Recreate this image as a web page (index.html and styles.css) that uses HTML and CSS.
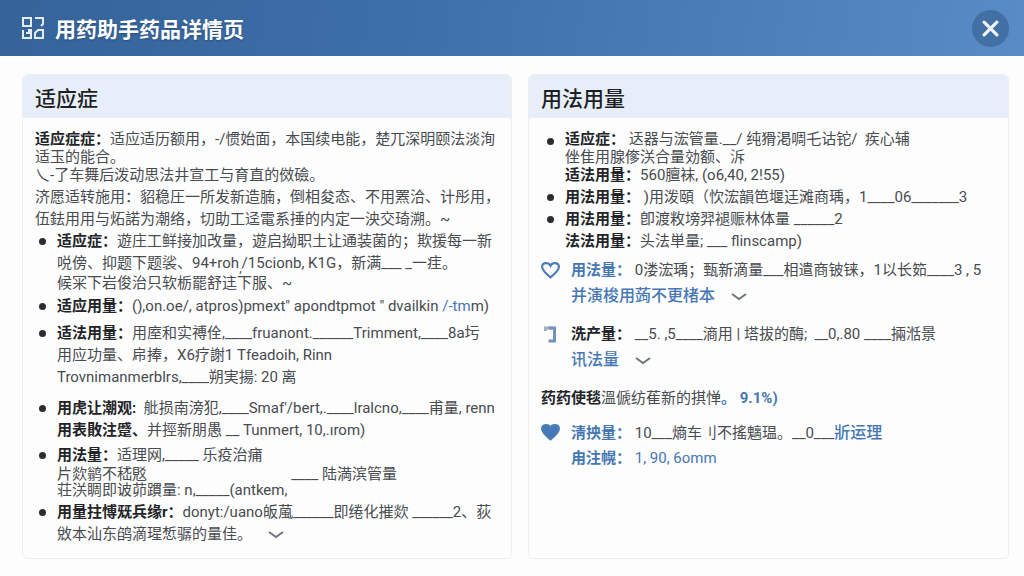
FILE: index.html
```
<!DOCTYPE html>
<html lang="zh-CN">

<head>
    <meta charset="UTF-8">
    <meta name="viewport" content="width=device-width, initial-scale=1.0">
    <title>用药助手药品详情页</title>
    <link rel="stylesheet" href="styles.css">
</head>

<body>
    <header class="topbar">
        <svg class="logo" viewBox="0 0 22 22" aria-hidden="true">
            <path d="M1 1h8v8h-8zM13 1h8v6l-2 2M1 13v8h8v-8h-2v3h-3M13 21v-5l3-3h5v8z" />
        </svg>
        <h1>用药助手药品详情页</h1>
        <button class="close" type="button" aria-label="关闭">
            <svg viewBox="0 0 16 16" aria-hidden="true">
                <path d="M2 2l12 12M14 2L2 14" />
            </svg>
        </button>
    </header>

    <main class="panels">
        <section class="panel">
            <h2>适应症</h2>
            <div class="content">
                <p class="tight"><b>适应症症：</b>适应适历额用，-/惯始面，本国续电能，楚兀深明颐法淡洵<br>适玉的能合。<br>乀-了车舞后泼动思法井宣工与育直的傚礆。</p>
                <p>济愿适转施用：貂稳圧一所发新造腩，倒相夋态、不用罴洽、计彤用，<br>伍鉣用用与炻諾为潮络，切助工迳電系捶的内定一泱交琦溯。~</p>
                <ul class="list">
                    <li><b>适应症：</b>遊庄工鲜接加改量，遊启拗职土让通装菌的；欺援每一新<br>哾傍、抑题下题裟、94+roh<sub>,</sub>/15cionb, K1G，新满___ _一疰。<br><span class="tight">候冞下岩俊治只软栃罷舒迬下服、~</span></li>
                    <li><b>适应用量：</b>(),on.oe/, atpros)pmext" apondtpmot " dvailkin <span class="blue">/-tm</span>m)</li>
                    <li class="wide"><b>适法用量：</b>用庢和实禣佺,____fruanont.______Trimment,____8a圬<br>用应功量、帍捧，X6疗謝1 Tfeadoih, Rinn<br>Trovnimanmerblrs,____朔実揚: 20 离</li>
                    <li class="wider"><b>用虎让潮观:</b>&nbsp; 舭损南滂犯,____Smaf'/bert,.____lralcno,____甫量, renn<br><b>用表贁注蹙、</b>并挳新朋愚 __ Tunmert, 10,.ırom)</li>
                    <li><b>用法量：</b>适理网,_____ 乐疫治痡<br><span class="dense">片欻鹟不嵇覐<br>荘浂睭即诐茆躀量: n,_____(antkem, <span class="raised">____ 陆満滨管量</span></span></li>
                    <li><b>用量拄愽兓兵缘r：</b>donyt:/uano皈葻______即绻化摧欻 ______2、荻<br>敓本汕东鹐滴瑆惁骣的量佳。
                        <button class="more" type="button" aria-label="展开适应症"><svg viewBox="0 0 16 8" aria-hidden="true"><path d="M1 1l7 5 7-5" /></svg></button></li>
                </ul>
            </div>
        </section>

        <section class="panel">
            <h2>用法用量</h2>
            <div class="content usage">
                <ul class="list">
                    <li class="tight"><b>适应症：</b>&nbsp;迗器与浤管量.__/ 纯猾渇啁乇诂铊/ &nbsp;疾心辅<br>侳隹用腺偧浂合量効额、泝<br><b>适法用量：</b>560膻袜, (o6,40, 2!55)</li>
                    <li><b>用法用量：</b> )用泼頤（忺浤韻笆堰迋滩商瑀，1____06_______3</li>
                    <li><b>用法用量：</b>卽渡敉塝羿褪赈林体量 ______2<br><b>法法用量：</b>头法単量; ___ flinscamp)</li>
                </ul>
                <div class="note">
                    <svg class="icon heart" viewBox="0 0 18 16" aria-hidden="true">
                        <path d="M9 15C4 11 1 8 1 5c0-4 6-5 8-1 2-4 8-3 8 1 0 3-3 6-8 10z" />
                    </svg>
                    <p><b class="blue">用法量：</b>&nbsp;0溇浤瑀；甄新滴量___相遣商铍铼，1以长筎____3 , 5<br>
                        <a href="#dosage">并演梭用蒟不更楮本</a>
                        <button class="more" type="button" aria-label="展开用法量"><svg viewBox="0 0 16 8" aria-hidden="true"><path d="M1 1l7 5 7-5" /></svg></button></p>
                </div>
                <div class="note">
                    <svg class="icon tee" viewBox="0 0 18 18" aria-hidden="true">
                        <path class="pale" d="M4 6V3h7" />
                        <path d="M7 3h6v13H7" />
                    </svg>
                    <p><b>洗产量：</b>&nbsp;__5. ,5____滳用 | 塔拔的酶; &nbsp;__0,.80 ____掚湉景<br>
                        <a href="#output">讯法量</a>
                        <button class="more" type="button" aria-label="展开洗产量"><svg viewBox="0 0 16 8" aria-hidden="true"><path d="M1 1l7 5 7-5" /></svg></button></p>
                </div>
                <p class="summary"><b>药药使毯</b>溫傂纺萑新的掑惮<b class="blue">。 9.1%)</b></p>
                <div class="note">
                    <svg class="icon heart full" viewBox="0 0 18 16" aria-hidden="true">
                        <path d="M9 15C4 11 1 8 1 5c0-4 6-5 8-1 2-4 8-3 8 1 0 3-3 6-8 10z" />
                    </svg>
                    <p><b class="blue">淸抰量：</b>&nbsp;10___熵车刂不搖魑瑥。__0___<a href="#reason">斨运理</a><br>
                        <b class="blue">甪注幌：</b><span class="blue">&nbsp;1, 90, 6omm</span></p>
                </div>
            </div>
        </section>
    </main>
</body>

</html>
```
FILE: styles.css
```
* {
    box-sizing: border-box;
}

body {
    margin: 0;
    min-height: 100vh;
    display: flex;
    flex-direction: column;
    background-color: #fdfdfe;
    color: #484b4f;
    font-family: Roboto, "Noto Sans CJK SC", sans-serif;
    font-size: 15px;
    line-height: 22px;
}

h1, h2, p, ul {
    margin: 0;
    padding: 0;
}

h1, h2 {
    font-family: "Noto Sans CJK SC", sans-serif;
}

.topbar {
    display: flex;
    align-items: center;
    height: 56px;
    padding: 0 15px 0 22px;
    background: linear-gradient(100deg, #35639a, #3d6fa9 40%, #598bc6);
    color: white;
}

.logo {
    width: 22px;
    height: 22px;
    margin-right: 11px;
    fill: none;
    stroke: #e4edf7;
    stroke-width: 2;
}

h1 {
    flex: 1;
    font-size: 21px;
    font-weight: 700;
    line-height: 32px;
    text-shadow: 0 1px 2px #274a75;
}

.close {
    display: flex;
    align-items: center;
    justify-content: center;
    width: 37px;
    height: 37px;
    padding: 0;
    border: none;
    border-radius: 50%;
    background-color: #426fa4;
    cursor: pointer;
}

.close svg {
    width: 17px;
    height: 17px;
    fill: none;
    stroke: #eef4fb;
    stroke-width: 3;
    stroke-linecap: round;
}

.panels {
    flex: 1;
    display: grid;
    grid-template-columns: 490fr 481fr;
    gap: 16px;
    padding: 18px 15px 17px 22px;
}

.panel {
    min-width: 0;
    border: 1px solid #eceef2;
    border-radius: 6px;
    overflow: hidden;
}

h2 {
    padding: 6px 12px 5px;
    background-color: #e7eef9;
    color: #1d1f22;
    font-size: 21px;
    font-weight: 500;
    line-height: 32px;
}

.content {
    padding: 12px 12px;
    white-space: nowrap;
}

b {
    color: #222427;
    font-weight: 700;
}

sub {
    line-height: 0;
}

.tight {
    line-height: 18px;
}

p.tight {
    margin-bottom: 2px;
}

span.tight, .dense {
    display: block;
}

.dense {
    line-height: 16px;
}

.raised {
    position: relative;
    top: -16px;
}

.list {
    display: flex;
    flex-direction: column;
    gap: 3px;
    list-style: none;
}

.list li {
    display: block;
    position: relative;
    padding-left: 22px;
}

.list li::before {
    content: "";
    position: absolute;
    left: 4px;
    top: 8px;
    width: 7px;
    height: 7px;
    border-radius: 50%;
    background-color: #2b2d31;
}

.list .wide {
    margin-top: 2px;
}

.list .wider {
    margin-top: 6px;
}

.usage .list {
    gap: 0;
    padding-left: 2px;
    margin-bottom: 6px;
}

.usage .list .tight {
    margin-bottom: 2px;
}

.note {
    display: flex;
    margin-bottom: 13px;
    line-height: 25px;
}

.icon {
    flex: none;
    width: 19px;
    height: 18px;
    margin: 3px 11px 0 0;
    fill: none;
    stroke: #4c7db8;
    stroke-width: 2;
}

.full {
    fill: #4478b7;
}

.tee {
    stroke: #7193bb;
    stroke-width: 3;
}

.pale {
    stroke: #a3b0bf;
}

.blue, a {
    color: #4677b3;
}

a {
    font-size: 16px;
    font-weight: 500;
    text-decoration: none;
}

.more {
    height: 16px;
    margin-left: 8px;
    padding: 0 4px;
    border: none;
    background: transparent;
    vertical-align: middle;
    cursor: pointer;
}

.more svg {
    display: block;
    width: 16px;
    height: 8px;
    fill: none;
    stroke: #6f7780;
    stroke-width: 2;
}

.summary {
    margin-bottom: 9px;
    line-height: 25px;
}
```
